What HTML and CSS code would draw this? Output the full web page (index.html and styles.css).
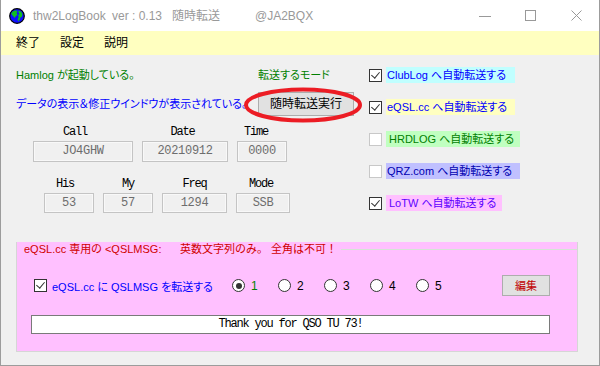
FILE: index.html
```html
<!DOCTYPE html>
<html lang="ja">
<head>
<meta charset="utf-8">
<title>thw2LogBook</title>
<link rel="stylesheet" href="styles.css">
</head>
<body>
<div class="window">
  <div class="titlebar">
    <svg class="app-icon" width="16" height="16" viewBox="0 0 16 16">
      <circle cx="8" cy="8" r="7.3" fill="#1010ff" stroke="#000" stroke-width="1.2"/>
      <path d="M4 3.2 L7 2.2 L8.5 3.5 L7.5 5 L8.5 6.5 L7 8 L5.5 10 L4.5 8.5 L3 7 L2.2 5.5 Z" fill="#10c020"/>
      <path d="M9.5 2.5 L12 3.5 L13.5 6 L13 8.5 L11.5 9.5 L10.5 12 L9 13.5 L8.8 11 L9.8 9 L9 7.5 L10.5 6 L9.5 4.5 Z" fill="#10c020"/>
    </svg>
    <div class="title">
      <span class="t-name">thw2LogBook</span>
      <span class="t-ver">ver : 0.13</span>
      <span class="t-mode">随時転送</span>
      <span class="t-call">@JA2BQX</span>
    </div>
    <div class="controls">
      <div class="ctl"><svg width="12" height="12" viewBox="0 0 12 12"><line x1="0" y1="6.5" x2="12" y2="6.5" stroke="#999" stroke-width="1"/></svg></div>
      <div class="ctl"><svg width="12" height="12" viewBox="0 0 12 12"><rect x="0.5" y="0.5" width="10" height="10" fill="none" stroke="#999" stroke-width="1"/></svg></div>
      <div class="ctl"><svg width="12" height="12" viewBox="0 0 12 12"><path d="M0.5 0.5 L10.5 10.5 M10.5 0.5 L0.5 10.5" stroke="#999" stroke-width="1"/></svg></div>
    </div>
  </div>

  <div class="menubar">
    <span class="menu-item">終了</span>
    <span class="menu-item">設定</span>
    <span class="menu-item">説明</span>
  </div>

  <div class="client">
    <div class="top">
      <div class="left">
        <div class="status-row">
          <span class="green">Hamlog が起動している。</span>
          <span class="green">転送するモード</span>
        </div>
        <div class="status-row row2">
          <span class="blue">データの表示＆修正ウインドウが表示されている。</span>
          <div class="btn-wrap">
            <button class="btn run">随時転送実行</button>
            <svg class="ring" width="120" height="37" viewBox="0 0 120 37">
              <ellipse cx="59" cy="18" rx="57" ry="15.5" fill="none" stroke="#ec1c24" stroke-width="4"/>
            </svg>
          </div>
        </div>

        <div class="fields f1">
          <div class="field w-call"><div class="lbl">Call</div><div class="box">JO4GHW</div></div>
          <div class="field w-date"><div class="lbl">Date</div><div class="box">20210912</div></div>
          <div class="field w-time"><div class="lbl">Time</div><div class="box">0000</div></div>
        </div>
        <div class="fields f2">
          <div class="field w-his"><div class="lbl">His</div><div class="box">53</div></div>
          <div class="field w-my"><div class="lbl">My</div><div class="box">57</div></div>
          <div class="field w-freq"><div class="lbl">Freq</div><div class="box">1294</div></div>
          <div class="field w-mode"><div class="lbl">Mode</div><div class="box">SSB</div></div>
        </div>
      </div>

      <div class="right">
        <div class="opt"><span class="cb on"></span><span class="opt-lbl clublog">ClubLog へ自動転送する</span></div>
        <div class="opt"><span class="cb on"></span><span class="opt-lbl eqsl">eQSL.cc へ自動転送する</span></div>
        <div class="opt"><span class="cb"></span><span class="opt-lbl hrdlog">HRDLOG へ自動転送する</span></div>
        <div class="opt"><span class="cb"></span><span class="opt-lbl qrz">QRZ.com へ自動転送する</span></div>
        <div class="opt"><span class="cb on"></span><span class="opt-lbl lotw">LoTW へ自動転送する</span></div>
      </div>
    </div>

    <div class="panel">
      <div class="caption-row">
        <span class="cap1">eQSL.cc 専用の &lt;QSLMSG:</span>
        <span class="cap2">英数文字列のみ。 全角は不可！</span>
        <span class="cap-line"></span>
      </div>
      <div class="msg-row">
        <div class="msg-check"><span class="cb on"></span><span class="blue">eQSL.cc に QSLMSG を転送する</span></div>
        <div class="radio-item"><span class="rb on"></span><span class="green">1</span></div>
        <div class="radio-item"><span class="rb"></span><span>2</span></div>
        <div class="radio-item"><span class="rb"></span><span>3</span></div>
        <div class="radio-item"><span class="rb"></span><span>4</span></div>
        <div class="radio-item"><span class="rb"></span><span>5</span></div>
        <button class="btn edit">編集</button>
      </div>
      <div class="msg-box">Thank you for QSO TU 73!</div>
    </div>
  </div>
</div>
</body>
</html>
```

FILE: styles.css
```css
* { box-sizing: border-box; }
html, body { margin: 0; padding: 0; background: #f0f0f0; }
body {
  font-family: "Liberation Sans", "Noto Sans CJK JP", sans-serif;
  font-size: 11px;
  color: #000;
  font-feature-settings: "palt";
  white-space: nowrap;
}
.window {
  width: 600px;
  height: 366px;
  border: 1px solid #9c9c9c;
  border-top: none;
  background: #f0f0f0;
  display: flex;
  flex-direction: column;
  overflow: hidden;
}
.titlebar {
  height: 31px;
  background: #fff;
  display: flex;
  align-items: center;
  padding-left: 8px;
}
.app-icon { flex: none; margin-right: 8px; }
.title {
  display: flex;
  color: #999;
  font-size: 12px;
  line-height: 16px;
  font-feature-settings: normal;
}
.t-name { width: 79px; }
.t-ver { width: 60px; }
.t-mode { width: 83px; }
.controls { display: flex; margin-left: auto; margin-right: -1px; }
.ctl { width: 46px; height: 31px; display: flex; align-items: center; justify-content: center; }

.menubar {
  height: 24px;
  background: #ffffc0;
  display: flex;
  align-items: center;
  gap: 20px;
  padding-left: 15px;
  font-size: 12px;
}
.menu-item { line-height: 16px; width: 24px; }

.client { flex: 1; padding: 12px 0 0 15px; }
.top { display: flex; }
.left { width: 353px; }
.status-row {
  display: grid;
  grid-template-columns: 242px auto;
  align-items: center;
  line-height: 16px;
  height: 16px;
}
.row2 { margin-top: 9px; height: 24px; }
.green { color: #008000; }
.blue { color: #0000ff; }
.btn {
  font-family: "Liberation Sans", "Noto Sans CJK JP", sans-serif;
  font-size: 12px;
  font-feature-settings: normal;
  background: #e1e1e1;
  border: 1px solid #adadad;
  padding: 0;
  color: #000;
  line-height: 16px;
}
.btn-wrap { position: relative; width: 96px; height: 24px; }
.run { width: 96px; height: 24px; }
.ring { position: absolute; left: -14px; top: -5px; pointer-events: none; }

.fields { display: flex; gap: 9px; }
.f1 { margin-top: 9px; padding-left: 17px; }
.f2 { margin-top: 15px; padding-left: 28px; }
.field { display: flex; flex-direction: column; }
.lbl {
  font-family: "Liberation Mono", monospace;
  font-size: 12px;
  letter-spacing: -1.2px;
  line-height: 14px;
  text-align: center;
  color: #000;
}
.box {
  margin-top: 2px;
  height: 21px;
  border: 1px solid #c4c4c4;
  box-shadow: inset 0 0 0 1px #f8f8f8;
  background: #f0f0f0;
  color: #6d6d6d;
  font-family: "Liberation Mono", monospace;
  font-size: 12px;
  letter-spacing: -0.3px;
  line-height: 19px;
  text-align: center;
}
.f2 .box { height: 20px; line-height: 18px; }
.w-call { width: 100px; }
.w-call .lbl { padding-right: 16px; }
.w-date { width: 86px; }
.w-date .lbl { padding-right: 5px; }
.w-time { width: 50px; }
.w-time .lbl { padding-right: 12px; }
.w-his { width: 50px; }
.w-his .lbl { padding-right: 8px; }
.w-my { width: 50px; }
.w-freq { width: 65px; }
.w-mode { width: 54px; }
.w-mode .lbl { padding-right: 4px; }

.right { display: flex; flex-direction: column; gap: 16px; }
.opt { display: flex; align-items: center; height: 16px; gap: 4px; }
.cb {
  width: 13px; height: 13px; flex: none;
  border: 1px solid #c8c8c8;
  background: #fff;
  position: relative;
}
.cb.on { border-color: #333; }
.cb.on::after {
  content: "";
  position: absolute;
  left: 3px; top: 0px;
  width: 4px; height: 7px;
  border: solid #333;
  border-width: 0 1.5px 1.5px 0;
  transform: rotate(40deg);
}
.opt-lbl { height: 16px; line-height: 16px; padding-left: 1px; overflow: hidden; }
.clublog { background: #c0ffff; color: #0000ff; width: 129px; }
.eqsl { background: #ffffc0; color: #0000ff; width: 129px; }
.hrdlog { background: #c0ffc0; color: #008000; width: 134px; padding-left: 3px; }
.qrz { background: #c0c0ff; color: #0000b0; width: 134px; }
.lotw { background: #ffc0ff; color: #6000ff; width: 116px; padding-left: 3px; }

.panel {
  margin-top: 29px;
  width: 562px;
  background: #ffc0ff;
  border: 1px solid #d6d6d6;
  border-top: none;
  padding: 0 27px 17px 14px;
}
.caption-row {
  display: flex;
  align-items: center;
  height: 14px;
  line-height: 14px;
  color: #d00000;
  margin-left: -7px;
  margin-right: -27px;
}
.cap1 { width: 156px; }
.cap2 { font-feature-settings: normal; }
.cap-line { flex: 1; height: 1px; background: #d4e4d4; margin-left: 4px; }
.msg-row {
  margin-top: 19px;
  height: 21px;
  display: flex;
  align-items: center;
  padding-left: 3px;
}
.msg-check { display: flex; align-items: center; gap: 5px; width: 198px; }
.radio-item { display: flex; align-items: center; gap: 6px; width: 46px; font-size: 12px; }
.rb {
  width: 13px; height: 13px; flex: none;
  border: 1px solid #333;
  border-radius: 50%;
  background: #fff;
  position: relative;
}
.rb.on::after {
  content: "";
  position: absolute;
  left: 2.5px; top: 2.5px;
  width: 6px; height: 6px;
  border-radius: 50%;
  background: #333;
}
.edit { margin-left: auto; width: 48px; height: 21px; color: #c00000; font-size: 11px; }
.msg-box {
  margin-top: 19px;
  width: 519px;
  height: 19px;
  background: #fff;
  border: 1px solid #7a7a7a;
  font-family: "Liberation Mono", monospace;
  font-size: 12px;
  letter-spacing: -1.2px;
  line-height: 17px;
  text-align: center;
}
```
